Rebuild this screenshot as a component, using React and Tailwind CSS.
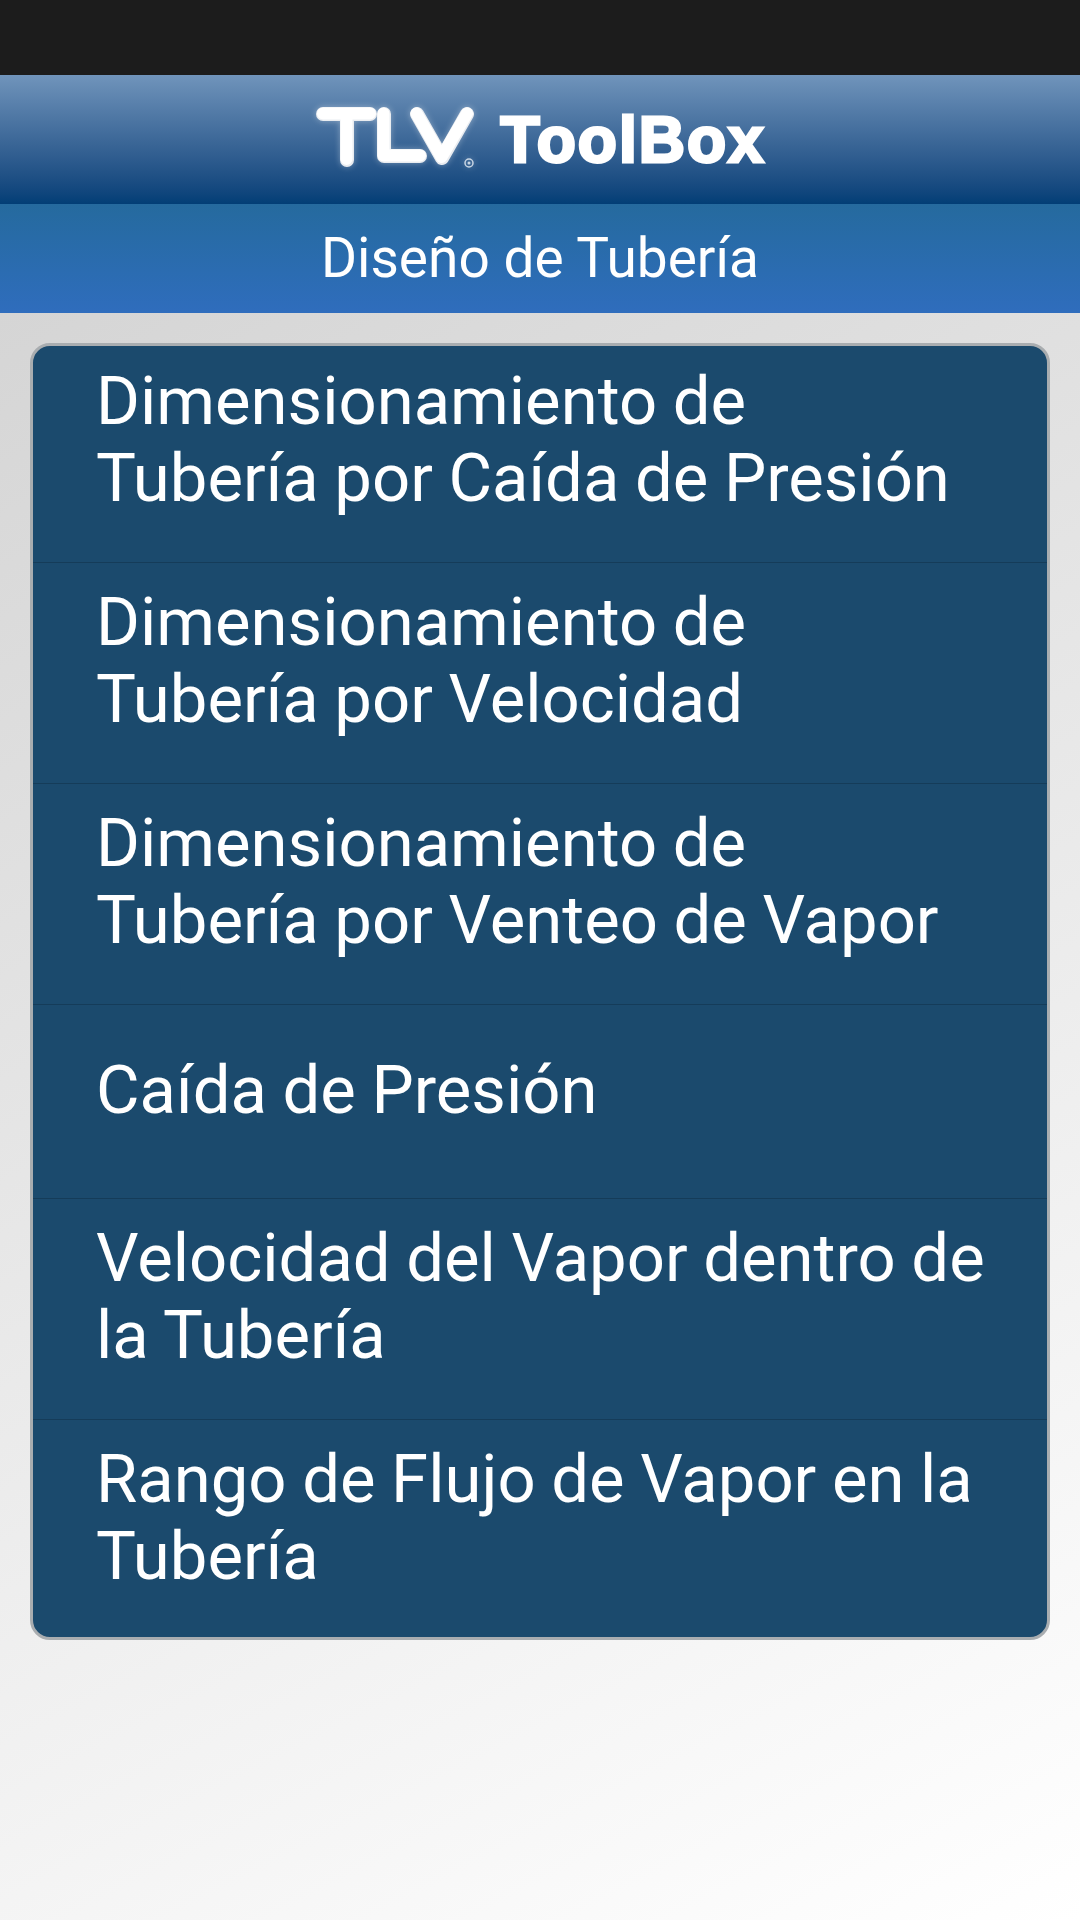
import React from 'react';

const opciones = [
  { lineas: ['Dimensionamiento de', 'Tubería por Caída de Presión'], clase: 'h-[217px] pt-[17px]' },
  { lineas: ['Dimensionamiento de', 'Tubería por Velocidad'], clase: 'h-[221px] pt-[21px]' },
  { lineas: ['Dimensionamiento de', 'Tubería por Venteo de Vapor'], clase: 'h-[221px] pt-[21px]' },
  { lineas: ['Caída de Presión'], clase: 'h-[194px] pt-[47px]' },
  { lineas: ['Velocidad del Vapor dentro de', 'la Tubería'], clase: 'h-[221px] pt-[21px]' },
  { lineas: ['Rango de Flujo de Vapor en la', 'Tubería'], clase: 'h-[217px] pt-[21px]' },
];

// Marca TLV dibujada con trazos redondeados
const LogoTLV = () => (
  <svg width="170" height="70" viewBox="0 0 170 70" aria-label="TLV" className="shrink-0 drop-shadow-[0_0_3px_rgba(255,255,255,0.35)]">
    <g fill="none" strokeLinecap="round" strokeLinejoin="round">
      <g stroke="#e9ecf0" strokeWidth="14">
        <path d="M9 9H56M33 9V55" />
        <path d="M70 9V51H106" />
        <path d="M103 9L128 53L153 9" />
      </g>
      <g stroke="#ffffff" strokeWidth="12">
        <path d="M9 8.5H56M32.5 8.5V54" />
        <path d="M69.5 8.5V50.5H106" />
        <path d="M102.5 8.5L127.5 52L153 8.5" />
      </g>
    </g>
    <circle cx="155" cy="58" r="4" fill="none" stroke="#c9d6e4" strokeWidth="1.5" />
    <circle cx="155" cy="58" r="1.5" fill="#c9d6e4" />
  </svg>
);

const App = () => {
  return (
    <div className="min-h-[1920px] flex flex-col font-['Roboto',sans-serif]">
      <div className="h-[75px] bg-[#1c1c1c]"></div>

      <header className="h-[129px] bg-gradient-to-b from-[#7094bb] to-[#023e76] flex items-center justify-center gap-[16px]">
        <LogoTLV />
        <span className="font-['Liberation_Sans',sans-serif] font-bold text-white text-[64px] leading-none tracking-[2px] [-webkit-text-stroke:3px_white]">
          ToolBox
        </span>
      </header>

      <div className="h-[109px] bg-gradient-to-b from-[#256a9e] to-[#2f6dbd] flex items-center justify-center text-white text-[55px]">
        Diseño de Tubería
      </div>

      <main className="flex-1 bg-[linear-gradient(153deg,#d5d5d5,#ffffff)] px-[30px] pt-[30px]">
        <div className="bg-[#1b4a6d] border-[3px] border-[#a9adb0] rounded-[20px] overflow-hidden">
          {opciones.map((opcion, index) => (
            <div
              key={index}
              className={`${opcion.clase} pl-[63px] text-white text-[67px] leading-[77px] [word-spacing:-1px] border-b border-[#153c59] last:border-b-0`}
            >
              {opcion.lineas.map((linea) => (
                <div key={linea} className="whitespace-nowrap">{linea}</div>
              ))}
            </div>
          ))}
        </div>
      </main>
    </div>
  );
};

export default App;
